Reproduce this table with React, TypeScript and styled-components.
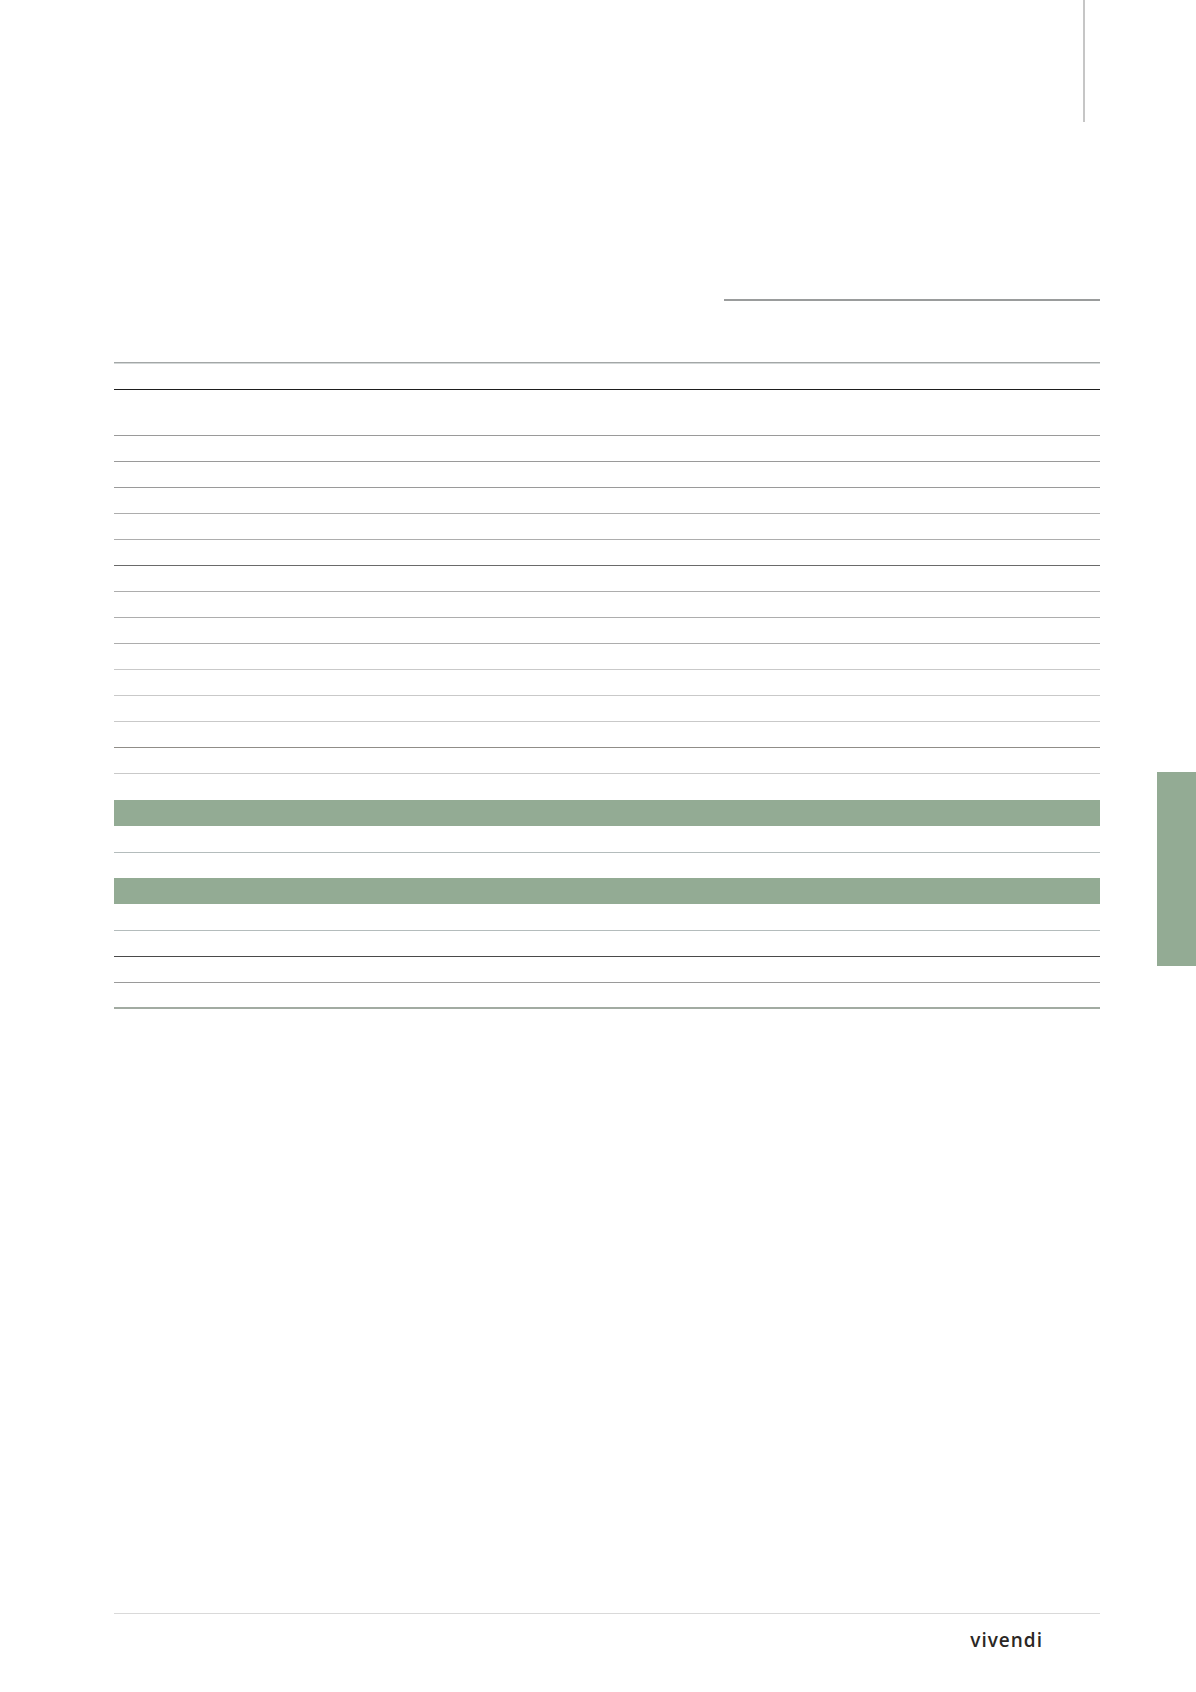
import styled, { createGlobalStyle } from "styled-components";

const GREEN = "#93ab94";

type Rule =
  | "none"
  | "faint"
  | "light"
  | "mid"
  | "strong"
  | "gray"
  | "dark"
  | "black"
  | "teal"
  | "double";

const RULE_COLORS: Record<Rule, string> = {
  none: "transparent",
  faint: "#c9c9c9",
  light: "#adadad",
  mid: "#9a9a9a",
  strong: "#6a6a6a",
  gray: "#908d88",
  dark: "#4a4a4a",
  black: "#1e1e1e",
  teal: "#b4bcbc",
  double: "#a2aba2",
};

type RowSpec = { h: number; rule?: Rule; band?: boolean };

const rows: RowSpec[] = [
  { h: 27, rule: "black" },
  { h: 46, rule: "mid" },
  { h: 26, rule: "mid" },
  { h: 26, rule: "mid" },
  { h: 26, rule: "light" },
  { h: 26, rule: "light" },
  { h: 26, rule: "strong" },
  { h: 26, rule: "light" },
  { h: 26, rule: "light" },
  { h: 26, rule: "light" },
  { h: 26, rule: "faint" },
  { h: 26, rule: "faint" },
  { h: 26, rule: "faint" },
  { h: 26, rule: "gray" },
  { h: 26, rule: "faint" },
  { h: 26, rule: "none" },
  { h: 26, band: true },
  { h: 27, rule: "teal" },
  { h: 25, rule: "none" },
  { h: 26, band: true },
  { h: 27, rule: "teal" },
  { h: 26, rule: "dark" },
  { h: 26, rule: "mid" },
  { h: 26, rule: "double" },
];

const GlobalStyle = createGlobalStyle`
  html, body {
    margin: 0;
    padding: 0;
    background: #ffffff;
  }
  body {
    font-family: "Open Sans", "Liberation Sans", sans-serif;
  }
`;

const Page = styled.div`
  width: 1196px;
  height: 1692px;
  display: flex;
  flex-direction: column;
  background: #ffffff;
  overflow: hidden;
`;

const TopMark = styled.div`
  height: 122px;
  display: flex;
  justify-content: flex-end;
  padding-right: 111px;
`;

const MarginRule = styled.div`
  width: 2px;
  height: 100%;
  background: #c6c6c6;
`;

const Main = styled.div`
  display: flex;
  margin-top: 177px;
`;

const Table = styled.div`
  margin-left: 114px;
  width: 986px;
  display: flex;
  flex-direction: column;
`;

const Grid = styled.div`
  display: grid;
  grid-template-columns: 610px 125px 125px 126px;
`;

const HeadRow = styled(Grid)`
  height: 64px;
  box-sizing: border-box;
  border-bottom: 1px solid #a3a7a7;
  box-shadow: 0 1px 0 #d3d7d7;
`;

const HeadCell = styled.div<{ $group?: boolean }>`
  border-top: 2px solid ${(p) => (p.$group ? "#9a9c9c" : "transparent")};
`;

const Row = styled(Grid)<{ $h: number; $rule: Rule; $band: boolean }>`
  height: ${(p) => p.$h}px;
  box-sizing: border-box;
  background: ${(p) => (p.$band ? GREEN : "transparent")};
  border-bottom: ${(p) => (p.$rule === "double" ? 2 : 1)}px solid
    ${(p) => RULE_COLORS[p.$rule]};
  ${(p) => (p.$band ? "border-bottom: none;" : "")}
`;

const Cell = styled.div``;

const TabColumn = styled.div`
  flex: 1;
  display: flex;
  justify-content: flex-end;
  align-items: flex-start;
  padding-top: 473px;
`;

const SectionTab = styled.div`
  width: 39px;
  height: 194px;
  background: ${GREEN};
`;

const Footer = styled.footer`
  margin-top: auto;
  padding: 0 96px 42px 114px;
  display: flex;
  flex-direction: column;
`;

const FooterRule = styled.div`
  width: 986px;
  height: 1px;
  background: #d9d9d9;
`;

const LogoRow = styled.div`
  display: flex;
  justify-content: flex-end;
  padding-right: 57px;
  margin-top: 16px;
`;

const Logo = styled.span`
  font-family: "Open Sans", "DejaVu Sans", sans-serif;
  font-weight: 600;
  font-size: 19px;
  line-height: 20px;
  letter-spacing: 1px;
  color: #2b2724;
`;

export default function App() {
  return (
    <>
      <GlobalStyle />
      <Page>
        <TopMark>
          <MarginRule />
        </TopMark>
        <Main>
          <Table>
            <HeadRow>
              <HeadCell />
              <HeadCell $group />
              <HeadCell $group />
              <HeadCell $group />
            </HeadRow>
            {rows.map((r, i) => (
              <Row key={i} $h={r.h} $rule={r.rule ?? "none"} $band={!!r.band}>
                <Cell />
                <Cell />
                <Cell />
                <Cell />
              </Row>
            ))}
          </Table>
          <TabColumn>
            <SectionTab />
          </TabColumn>
        </Main>
        <Footer>
          <FooterRule />
          <LogoRow>
            <Logo>vivendi</Logo>
          </LogoRow>
        </Footer>
      </Page>
    </>
  );
}
